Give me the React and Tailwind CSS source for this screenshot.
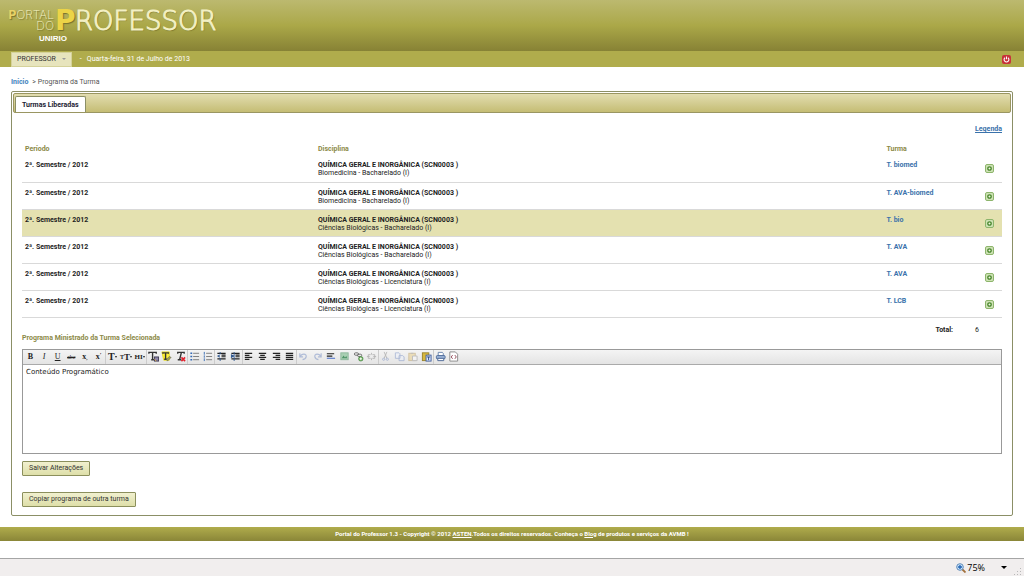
import React from "react";

const rows = [
  ["Biomedicina - Bacharelado (I)", "T. biomed"],
  ["Biomedicina - Bacharelado (I)", "T. AVA-biomed"],
  ["Ciências Biológicas - Bacharelado (I)", "T. bio"],
  ["Ciências Biológicas - Bacharelado (I)", "T. AVA"],
  ["Ciências Biológicas - Licenciatura (I)", "T. AVA"],
  ["Ciências Biológicas - Licenciatura (I)", "T. LCB"],
];

const Svg = ({ children, faded }) => (
  <svg viewBox="0 0 12 12" className={faded ? "size-[11px] opacity-40" : "size-[11px]"} fill="none" stroke="#333" aria-hidden="true">
    {children}
  </svg>
);

const Caret = () => <span className="border-x-[1px] border-t-2 border-x-transparent border-t-[#222]" />;

const Lines = ({ d }) => (
  <Svg>
    <path d={d} stroke="#222" strokeWidth="1.3" />
  </Svg>
);

const tools = [
  ["Negrito", <b className="text-[8px]">B</b>],
  ["Itálico", <i className="text-[8px]">I</i>],
  ["Sublinhado", <u className="text-[8px]">U</u>],
  ["Tachado", <s className="text-[6px]">abc</s>],
  ["Subscrito", <span className="text-[8px] font-bold">x<sub className="text-[5px]">,</sub></span>],
  ["Sobrescrito", <span className="text-[8px] font-bold">x<sup className="text-[5px]">’</sup></span>],
  ["Fonte", <span className="flex items-center text-[10px] font-bold">T<Caret /></span>, true],
  ["Tamanho", <span className="flex items-center text-[9px] font-bold"><span className="text-[6px]">T</span>T<Caret /></span>],
  ["Título", <span className="flex items-center text-[7px] font-bold">HI<Caret /></span>],
  ["Cor do texto", <Svg>
    <path d="M1 3V1.5h8V3M5 1.5v8M3.5 9.5h3" strokeWidth="1.5" />
    <rect x="7" y="6.5" width="4.5" height="4.5" fill="#8d84a8" stroke="#403c55" />
    <path d="M7 9l2 2" stroke="#e6b63d" />
  </Svg>, true],
  ["Realce", <Svg>
    <path d="M1 1h8v9H3z" fill="#fff13a" stroke="#e8da20" />
    <path d="M2 3V2h6v1M5 2v7M3.5 9h3" strokeWidth="1.5" />
    <path d="M7 11l4-4-2-1-3 3z" fill="#9b9b62" stroke="#6b6b47" strokeWidth=".7" />
  </Svg>],
  ["Remover formato", <Svg>
    <path d="M3 3V1.5h7V3M7 1.5l-2 8M3 9.5h4" strokeWidth="1.5" />
    <path d="M7 7l4 4M11 7l-4 4" stroke="#e3202c" strokeWidth="1.7" />
  </Svg>],
  ["Lista", <Svg>
    <path d="M4.5 2.5H11M4.5 6H11M4.5 9.5H11" stroke="#777" />
    <path d="M1.500 2.5h2M1.500 6h2M1.500 9.5h2" stroke="#3569b4" strokeWidth="1.600" />
  </Svg>, true],
  ["Lista numerada", <Svg>
    <path d="M4.5 2.5H11M4.5 6H11M4.5 9.5H11" stroke="#777" />
    <path d="M2.5 1v3M2.5 4.8v2.5M2.5 8v3" stroke="#3569b4" />
  </Svg>],
  ["Diminuir recuo", <Svg>
    <path d="M1.500 2.500h9M6 4.400h4.500M6 6.300h4.500M1.500 8.500h9" stroke="#222" strokeWidth="1.300" />
    <path d="M5 3.200L1 5.500 5 7.800zM4 1h1v10H4z" fill="#345b91" stroke="none" />
  </Svg>, true],
  ["Aumentar recuo", <Svg>
    <path d="M1.500 2.500h9M6 4.400h4.500M6 6.300h4.500M1.500 8.500h9" stroke="#222" strokeWidth="1.300" />
    <path d="M1 3.200l4 2.300L1 7.800zM4 1h1v10H4z" fill="#345b91" stroke="none" />
  </Svg>],
  ["Alinhar à esquerda", <Lines d="M2 2.5h8M2 4.7h5M2 6.9h8M2 9.1h5" />, true],
  ["Centralizar", <Lines d="M2 2.5h8M3.5 4.7h5M2 6.9h8M3.5 9.1h5" />],
  ["Alinhar à direita", <Lines d="M2 2.5h8M5 4.7h5M2 6.9h8M5 9.1h5" />],
  ["Justificar", <Lines d="M2 2.5h8M2 4.7h8M2 6.9h8M2 9.1h8" />],
  ["Desfazer", <Svg faded>
    <path d="M5 9.5c5-1 5-6 1.5-6C4.500 3.500 3 4.500 2.500 6M2 2.500v4h3.500" stroke="#5574b8" strokeWidth="1.300" />
  </Svg>, true],
  ["Refazer", <Svg faded>
    <path d="M7 9.500c-5-1-5-6-1.500-6C7.500 3.500 9 4.500 9.500 6M10 2.500v4H6.500" stroke="#5574b8" strokeWidth="1.300" />
  </Svg>],
  ["Linha horizontal", <Svg>
    <path d="M2 3h8M2 5.500h6" stroke="#222" strokeWidth="1.300" />
    <path d="M2 8h9" stroke="#6f8bd0" strokeWidth="1.500" />
  </Svg>],
  ["Imagem", <Svg>
    <rect x="2" y="2" width="8" height="7.500" fill="#a9cfb3" stroke="#8fb79c" />
    <path d="M3 8l2-3 1.500 2L8 5.500 9 8z" fill="#4f9468" stroke="none" />
  </Svg>],
  ["Inserir link", <Svg>
    <rect x="1.500" y="2" width="4.500" height="2.600" rx="1.300" stroke="#666" />
    <rect x="5" y="3.500" width="4.500" height="2.600" rx="1.300" stroke="#666" />
    <circle cx="8.500" cy="8.500" r="2.500" fill="#5da64e" stroke="#3d8038" strokeWidth=".6" />
    <path d="M7 8.500h3M8.500 7v3" stroke="#fff" />
  </Svg>],
  ["Remover link", <Svg faded>
    <path d="M5 4H2.500v4H5M7 4h2.500v4H7M1 6h3M8 6h3M6 2v2M6 8v2" stroke="#666" />
  </Svg>],
  ["Recortar", <Svg faded>
    <path d="M4.500 1L7.500 8M7.500 1L4.500 8" stroke="#666" />
    <circle cx="4" cy="9" r="1.200" stroke="#5574b8" />
    <circle cx="8" cy="9" r="1.200" stroke="#5574b8" />
  </Svg>, true],
  ["Copiar", <Svg faded>
    <path d="M1.500 2h4l1 1v5h-5zM5.500 5h4l1.500 1.500v4H5.500z" fill="#eef3ff" stroke="#5574b8" />
  </Svg>],
  ["Colar", <Svg faded>
    <rect x="2" y="2.500" width="7" height="8" fill="#e8c56b" stroke="#a8802f" />
    <path d="M4 2.500h3M6 5.500h5v5H6z" fill="#fff" stroke="#777" />
  </Svg>],
  ["Colar como texto", <Svg>
    <rect x="1.500" y="2" width="7" height="8.500" fill="#d9b83d" stroke="#98822c" />
    <rect x="5.500" y="4.500" width="5.500" height="6.500" fill="#dbe8ff" stroke="#425f9c" />
    <path d="M6.500 6.500H10M8.300 6.500v3.500" stroke="#26437e" />
  </Svg>],
  ["Imprimir", <Svg>
    <path d="M3.500 5V1.500H8L9 2.500V5" fill="#fff" stroke="#6782ac" />
    <rect x="1.500" y="5" width="9.500" height="3.500" rx="1" fill="#9db5d8" stroke="#466494" />
    <path d="M3 8h6.500v2.500H3z" fill="#fff" stroke="#466494" />
  </Svg>, true],
  ["Código-fonte", <Svg>
    <path d="M2 1h6l2.500 2.500V11H2z" fill="#fff" stroke="#888" />
    <path d="M5 4.500L3.500 6.500 5 8.500M7.500 4.500L9 6.500 7.500 8.500" stroke="#8c3f4f" />
  </Svg>],
];

function Logo() {
  return (
    <h1 className="flex items-start font-['DejaVu_Sans'] font-extralight text-[#f3f0c4] [text-shadow:1px_1px_1px_#77732c]">
      <span className="flex w-[46px] flex-col items-end pt-px font-['Inter'] text-[12px] leading-[11px]">
        <span><span className="font-bold text-[#e9d368]">P</span>ORTAL</span>
        <span>DO</span>
      </span>
      <span className="w-[21px] pl-px text-[28px] leading-[26px] font-bold text-[#ecd447]">P</span>
      <span className="text-[26px] leading-[26px] [-webkit-text-stroke:1px_#f3f0c4]">ROFESSOR</span>
    </h1>
  );
}

const olive = "text-[#8c8a48]";
const btn =
  "h-[15px] rounded-[1px] border border-[#8b8f5c] bg-linear-to-b from-[#f1f0cf] to-[#dedfa9] px-1.5 text-[7px] leading-[13px] text-[#333]";

export default function App() {
  return (
    <div className="flex min-h-screen flex-col bg-white font-['Roboto',sans-serif] text-[7px] leading-[8px] text-[#222]">
      <header className="h-[51px] bg-linear-to-b from-[#bcb96f] via-[#aba848] to-[#878235] pt-2 pl-2">
        <Logo />
        <p className="pl-[31px] font-['Liberation_Sans'] text-[8px] leading-[9px] font-bold text-white">UNIRIO</p>
      </header>
      <div className="flex h-4 items-center bg-[#b0ac4c] pr-[13px] pl-[11px] text-white">
        <button className="flex h-[15px] items-center gap-1.5 border border-[#d5d29a] bg-[#e7e4bd] px-[5px] text-[7px] text-[#333]">
          PROFESSOR
          <span className="border-x-2 border-t-2 border-x-transparent border-t-[#999]" />
        </button>
        <span className="ml-[8px] w-[7px]">-</span>
        <span>Quarta-feira, 31 de Julho de 2013</span>
        <button aria-label="Sair" className="ml-auto flex size-[9px] items-center justify-center rounded-[2px] bg-[#c8323a]">
          <svg viewBox="0 0 9 9" className="size-[9px]" fill="none" stroke="#fff" strokeWidth="1.100">
            <path d="M3 2.700a2.400 2.400 0 1 0 3 0M4.500 1.500v2.800" />
          </svg>
        </button>
      </div>
      <nav className="flex gap-1 px-[11px] pt-[11px] pb-[5px]">
        <a href="#inicio" className="font-bold text-[#3f83bd]">Início</a>
        <span className="text-[#555]">&gt; Programa da Turma</span>
      </nav>

      <main className="mx-[11px] rounded-[2px] border border-[#8b8f66] pb-2">
        <div className="m-px flex h-5 items-end rounded-[2px] border border-[#9a9662] bg-linear-to-b from-[#e2ddb0] to-[#c5bd74] pl-px">
          <button className="h-4 rounded-t-[2px] border border-b-0 border-[#8b8f66] bg-white px-1.5 text-[7px] font-bold text-[#223]">
            Turmas Liberadas
          </button>
        </div>
        <div className="px-2.5">
          <p className="pt-[11px] text-right">
            <a href="#legenda" className="font-bold text-[#3a72ab] underline">Legenda</a>
          </p>
          <table className="mt-3 w-full table-fixed border-collapse text-left">
            <colgroup>
              <col className="w-[30%]" />
              <col className="w-[58%]" />
              <col className="w-[8.500%]" />
              <col />
            </colgroup>
            <thead>
              <tr className={`h-[10px] align-top ${olive}`}>
                <th className="px-[3px]">Período</th>
                <th className="px-0.5">Disciplina</th>
                <th className="px-0.5">Turma</th>
                <th />
              </tr>
            </thead>
            <tbody>
              {rows.map(([course, group], i) => (
                <tr key={i} className={`h-[27px] border-b border-[#d9d9d9] align-top ${i === 2 ? "bg-[#e4e1b0]" : ""}`}>
                  <td className="px-[3px] pt-[6px] font-bold">2ª. Semestre / 2012</td>
                  <td className="px-0.5 pt-[6px]">
                    <b>QUÍMICA GERAL E INORGÂNICA (SCN0003 )</b>
                    <br />
                    {course}
                  </td>
                  <td className="px-0.5 pt-[6px]">
                    <a href="#turma" className="font-bold text-[#3a72ab]">{group}</a>
                  </td>
                  <td className="pt-[9px] pr-2">
                    <button aria-label={`Selecionar ${group}`} className="ml-auto block size-[9px] rounded-[2px] border border-[#8db56c] bg-[#cde2b4]">
                      <svg viewBox="0 0 7 7" className="size-[7px]" fill="#f0f7df" stroke="#47852c" strokeWidth="1.300">
                        <circle cx="3.500" cy="3.500" r="1.700" />
                      </svg>
                    </button>
                  </td>
                </tr>
              ))}
            </tbody>
          </table>
          <p className="flex justify-end gap-[22px] pt-2 pr-[23px]">
            <b>Total:</b>
            <span>6</span>
          </p>
          <h2 className={`font-bold ${olive}`}>
            <label htmlFor="programa">Programa Ministrado da Turma Selecionada</label>
          </h2>
          <div className="mt-[7px] border border-[#999]">
            <div className="flex h-[15px] border-b border-[#aaa] bg-linear-to-b from-[#f4f4f4] to-[#e4e4e4]">
              <div className="flex w-[437px] font-['Liberation_Serif',serif]">
                {tools.map(([name, icon, sep]) => (
                  <button
                    key={name}
                    aria-label={name}
                    className={`flex min-w-0 flex-1 items-center justify-center border-l leading-[10px] whitespace-nowrap ${sep ? "border-[#ccc]" : "border-transparent"}`}
                  >
                    {icon}
                  </button>
                ))}
              </div>
            </div>
            <textarea
              id="programa"
              defaultValue="Conteúdo Programático"
              className="block h-[88px] w-full resize-none px-[3px] pt-[3px] font-['DejaVu_Sans'] text-[7px] leading-[9px] outline-none"
            />
          </div>
          <div className="flex flex-col items-start gap-4 pt-[7px]">
            <button className={btn}>Salvar Alterações</button>
            <button className={btn}>Copiar programa de outra turma</button>
          </div>
        </div>
      </main>

      <footer className="mt-[11px] h-[14px] bg-linear-to-b from-[#b0ac4c] to-[#8a8638] text-center text-[6px] leading-[13px] font-bold text-white">
        Portal do Professor 1.3 - Copyright © 2012 <a href="#asten" className="underline">ASTEN</a>.Todos os direitos
        reservados. Conheça o <a href="#blog" className="underline">Blog</a> de produtos e serviços da AVMB !
      </footer>
      <div className="mt-auto flex h-[18px] items-center justify-end border-t border-[#a5a5a5] bg-[#f1eeee] pr-0.5 font-['Open_Sans'] text-[9px] text-black">
        <svg viewBox="0 0 10 10" className="size-[10px]" fill="none">
          <path d="M6 6l3.500 3.500" stroke="#a2713d" strokeWidth="1.800" />
          <circle cx="4" cy="4" r="3.300" fill="#cfe6fa" stroke="#5c88b8" />
          <path d="M4 2v4M2 4h4" stroke="#1e62b4" strokeWidth="1.300" />
        </svg>
        <span className="ml-px">75%</span>
        <button aria-label="Alterar zoom" className="ml-4 border-x-[3px] border-t-[3px] border-x-transparent border-t-black" />
        <svg viewBox="0 0 8 8" className="ml-[7px] size-2 self-end" fill="#b8b8b8">
          <path d="M6 0h1v1H6zM3 3h1v1H3zM6 3h1v1H6zM0 6h1v1H0zM3 6h1v1H3zM6 6h1v1H6z" />
        </svg>
      </div>
    </div>
  );
}
